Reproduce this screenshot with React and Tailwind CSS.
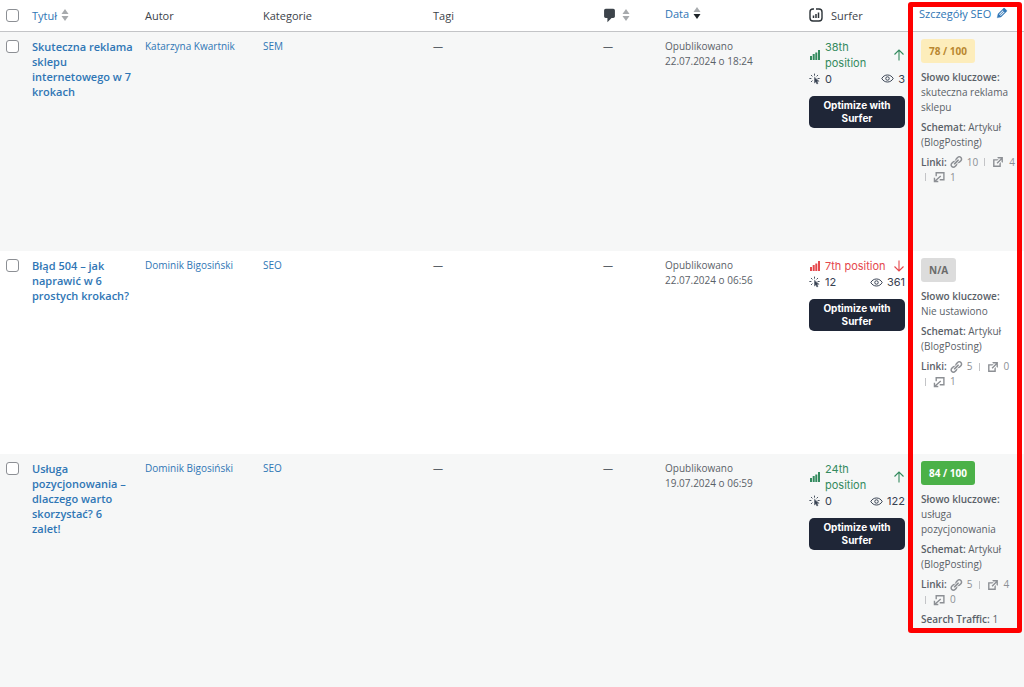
import React, { useState } from 'react';

const posts = [
  {
    id: 1,
    title: 'Skuteczna\u00a0reklama sklepu internetowego w 7 krokach',
    author: 'Katarzyna Kwartnik',
    category: 'SEM',
    date: '22.07.2024 o 18:24',
    position: '38th position',
    trend: 'up',
    clicks: 0,
    views: 3,
    score: '78 / 100',
    scoreClass: 'bg-[#fdedbb] text-[#b98730]',
    keyword: 'skuteczna reklama sklepu',
    links: [10, 4, 1],
    rowClass: 'h-[220px] bg-[#f6f7f7]',
  },
  {
    id: 2,
    title: 'Błąd 504 – jak naprawić w 6 prostych krokach?',
    author: 'Dominik Bigosiński',
    category: 'SEO',
    date: '22.07.2024 o 06:56',
    position: '7th position',
    trend: 'down',
    clicks: 12,
    views: 361,
    score: 'N/A',
    scoreClass: 'bg-[#dcdcdc] text-[#6b6b6b]',
    keyword: 'Nie ustawiono',
    links: [5, 0, 1],
    rowClass: 'h-[203px] bg-white',
  },
  {
    id: 3,
    title: 'Usługa pozycjonowania – dlaczego warto skorzystać? 6 zalet!',
    author: 'Dominik Bigosiński',
    category: 'SEO',
    date: '19.07.2024 o 06:59',
    position: '24th position',
    trend: 'up',
    clicks: 0,
    views: 122,
    score: '84 / 100',
    scoreClass: 'bg-[#4bb148] text-white',
    keyword: 'usługa pozycjonowania',
    links: [5, 4, 0],
    traffic: 1,
    rowClass: 'h-[233px] bg-[#f6f7f7]',
  },
];

const LinkIcon = () => (
  <svg viewBox="0 0 20 20" className="size-3.5" fill="currentColor" aria-hidden="true">
    <path d="M17.74 2.76c1.68 1.69 1.68 4.41 0 6.1l-1.53 1.52c-1.12 1.12-2.7 1.47-4.14 1.09l2.62-2.61.76-.77.76-.76c.84-.84.84-2.2 0-3.04-.84-.85-2.2-.85-3.04 0l-.77.76-3.38 3.38c-.37-1.44-.02-3.02 1.1-4.14l1.52-1.53c1.69-1.68 4.42-1.68 6.1 0zM8.59 13.43l5.34-5.34c.42-.42.42-1.1 0-1.52-.44-.43-1.13-.39-1.53 0l-5.33 5.34c-.42.42-.42 1.1 0 1.52.44.43 1.13.39 1.52 0zm-.76 2.29l4.14-4.15c.38 1.44.03 3.02-1.09 4.14l-1.52 1.53c-1.69 1.68-4.41 1.68-6.1 0-1.68-1.68-1.68-4.42 0-6.1l1.53-1.52c1.12-1.12 2.7-1.47 4.14-1.1l-4.14 4.15c-.85.84-.85 2.2 0 3.05.84.84 2.2.84 3.04 0z" />
  </svg>
);

const ExternalIcon = () => (
  <svg viewBox="0 0 20 20" className="size-3.5" fill="currentColor" aria-hidden="true">
    <path d="M9 3h8v8l-2-1V6.92l-5.6 5.59-1.41-1.41L14.08 5H10zm3 12v-3l2-2v7H3V6h8L9 8H5v7h7z" />
  </svg>
);

const IncomingIcon = () => (
  <svg viewBox="0 0 20 20" className="size-3.5" fill="none" stroke="currentColor" strokeWidth="2" aria-hidden="true">
    <path d="M6 9V4h11v10h-6" />
    <path d="M12.500 8.500L4 16M3.500 11v5.500H9" />
  </svg>
);

const EditIcon = () => (
  <svg viewBox="0 0 20 20" className="size-3.5" fill="currentColor" stroke="currentColor" strokeWidth="0.4" aria-hidden="true">
    <path d="M13.89 3.39l2.71 2.72c.46.46.42 1.24.03 1.64l-8.01 8.02-5.56 1.16 1.16-5.58s7.6-7.63 7.99-8.03c.39-.39 1.22-.39 1.68.07zm-2.73 2.79l-5.59 5.61 1.11 1.11 5.54-5.65zm-2.97 8.23l5.58-5.6-1.07-1.08-5.59 5.6z" />
  </svg>
);

const CommentIcon = () => (
  <svg viewBox="2 1 15 18" className="h-[15px] w-[13px]" fill="#3c434a" aria-hidden="true">
    <path d="M5 2h9c1.100 0 2 .9 2 2v7c0 1.100-.9 2-2 2h-2l-5 5v-5H5c-1.100 0-2-.9-2-2V4c0-1.100.9-2 2-2z" />
  </svg>
);

const SurferIcon = () => (
  <svg viewBox="0 0 14 14" className="size-3.5" fill="none" stroke="#2c3338" strokeWidth="1.4" aria-hidden="true">
    <path d="M5 1H4Q1 1 1 4V10Q1 13 4 13H10Q13 13 13 10V4Q13 1 10 1H7" />
    <path d="M4.500 10V7.500M7 10V6M9.500 10V4.500" strokeWidth="1.500" />
  </svg>
);

const SignalIcon = () => (
  <svg viewBox="0 0 10 10" className="size-2.5 shrink-0" fill="currentColor" aria-hidden="true">
    <rect x="0" y="6" width="2" height="4" />
    <rect x="2.700" y="4" width="2" height="6" />
    <rect x="5.300" y="2.500" width="2" height="7.500" />
    <rect x="8" y="0" width="2" height="10" />
  </svg>
);

const ClickIcon = () => (
  <svg viewBox="0 0 24 24" className="size-3" fill="none" stroke="#4b5563" strokeWidth="2" strokeLinecap="round" aria-hidden="true">
    <path d="M11 2v2.500M4.500 4.500l1.800 1.800M1.500 11h2.500M4.500 17.500l1.800-1.800M17.500 4.500l-1.800 1.800M18 11h2.500" />
    <path d="M11 9v11l2.700-2.500 2 4.500 2.300-1-2-4.500h3.500z" fill="#374151" strokeWidth="1" />
  </svg>
);

const EyeIcon = () => (
  <svg viewBox="0 0 24 24" className="size-[13px]" fill="none" stroke="#374151" strokeWidth="1.8" aria-hidden="true">
    <path d="M1.500 12C3.500 8 7.500 5.500 12 5.500S20.500 8 22.500 12c-2 4-6 6.500-10.500 6.500S3.500 16 1.500 12z" />
    <circle cx="12" cy="12" r="3.200" />
  </svg>
);

const TrendArrow = ({ trend }) => (
  <svg viewBox="0 0 12 12" className="ml-1 size-3 shrink-0" fill="none" stroke="currentColor" strokeWidth="1.1" aria-hidden="true">
    {trend === 'up' ? <path d="M6 11.500V1M1.500 5.500L6 1l4.500 4.500" /> : <path d="M6 .5V11M1.500 6.500L6 11l4.500-4.500" />}
  </svg>
);

const SortArrows = ({ active }) => (
  <svg viewBox="0 0 8 12" className="h-3 w-2" fill="#a7aaad" aria-hidden="true">
    <path d="M4 0l3.500 5h-7z" />
    <path d="M4 12L.5 7h7z" fill={active ? '#1d2327' : '#a7aaad'} />
  </svg>
);

const SurferCell = ({ post }) => (
  <div className="font-['Inter',sans-serif] text-[11px] leading-4 text-[#374151]">
    <div className={`flex items-center pl-px ${post.trend === 'up' ? 'text-[#338a5e]' : 'text-[#e5484d]'}`}>
      <SignalIcon />
      <span className="ml-[5px] flex-1">{post.position}</span>
      <TrendArrow trend={post.trend} />
    </div>
    <div className="flex items-center justify-between">
      <span className="flex items-center gap-1"><ClickIcon />{post.clicks}</span>
      <span className="flex items-center gap-1"><EyeIcon />{post.views}</span>
    </div>
    <button type="button" className="mt-[9px] block w-full rounded-[5px] bg-[#1f2637] px-2 py-[3px] text-[10px] leading-[13px] font-bold text-white">
      Optimize with Surfer
    </button>
  </div>
);

const SeoCell = ({ post }) => (
  <div className="flex flex-col items-start gap-[5px]">
    <span className={`mb-0.5 rounded-[3px] px-2 text-[10px] leading-6 font-bold ${post.scoreClass}`}>{post.score}</span>
    <p><strong className="block font-semibold">Słowo kluczowe:</strong>{post.keyword}</p>
    <p><strong className="font-semibold">Schemat:</strong> Artykuł<br />(BlogPosting)</p>
    <div className="flex flex-wrap items-center text-[#8c8f94]">
      <strong className="mr-0.5 font-semibold text-[#5a6168]">Linki:</strong>
      <LinkIcon />
      <span className="ml-1">{post.links[0]}</span>
      <span className="mx-1.5 h-2 w-px bg-[#c3c4c7]" />
      <ExternalIcon />
      <span className="ml-1">{post.links[1]}</span>
      <span className="flex basis-full items-center">
        <span className="mr-1.5 ml-1 h-2 w-px bg-[#c3c4c7]" />
        <IncomingIcon />
        <span className="ml-1">{post.links[2]}</span>
      </span>
    </div>
    {post.traffic && <p><strong className="font-semibold">Search Traffic:</strong> {post.traffic}</p>}
  </div>
);

const PostsTable = () => {
  const [selected, setSelected] = useState([]);

  const toggle = (id) => {
    setSelected(selected.includes(id) ? selected.filter((s) => s !== id) : [...selected, id]);
  };

  const toggleAll = () => {
    setSelected(selected.length === posts.length ? [] : posts.map((p) => p.id));
  };

  const checkbox = 'block size-[13px] appearance-none rounded-[3px] border border-[#8c8f94] bg-white checked:bg-[#2271b1]';

  return (
    <table className="w-full table-fixed border-collapse text-left">
      <colgroup>
        <col className="w-[24px]" />
        <col className="w-[113px]" />
        <col className="w-[118px]" />
        <col className="w-[170px]" />
        <col />
        <col className="w-[62px]" />
        <col className="w-[144px]" />
        <col className="w-[112px]" />
        <col className="w-[111px]" />
      </colgroup>
      <thead>
        <tr className="h-[31px] border-b border-[#c3c4c7] text-[11px] text-[#3c434a] [&>th]:px-2 [&>th]:font-normal">
          <td className="pl-1.5">
            <input type="checkbox" aria-label="Zaznacz wszystko" className={checkbox} checked={selected.length === posts.length} onChange={toggleAll} />
          </td>
          <th><a href="#title" className="flex items-center gap-1 text-[#2f76b5]">Tytuł <SortArrows /></a></th>
          <th>Autor</th>
          <th>Kategorie</th>
          <th>Tagi</th>
          <th><a href="#comments" aria-label="Komentarze" className="flex items-center gap-1.5"><CommentIcon /><SortArrows /></a></th>
          <th><a href="#date" className="flex items-center gap-1 pb-1 text-[#2f76b5]">Data <SortArrows active /></a></th>
          <th><span className="flex items-center gap-2"><SurferIcon />Surfer</span></th>
          <th><a href="#seo" className="-ml-0.5 flex items-center gap-1 pb-1 whitespace-nowrap text-[#2f76b5]">Szczegóły SEO <EditIcon /></a></th>
        </tr>
      </thead>
      <tbody>
        {posts.map((post) => (
          <tr key={post.id} className={`align-top [&>td]:px-2 [&>td]:pt-[7px] ${post.rowClass}`}>
            <td className="pt-2! pl-1.5!">
              <input type="checkbox" aria-label={post.title} className={checkbox} checked={selected.includes(post.id)} onChange={() => toggle(post.id)} />
            </td>
            <td className="pr-[5px]!"><a href="#post" className="block text-[11px] font-semibold text-[#2f76b5]">{post.title}</a></td>
            <td><a href="#author" className="text-[#2f76b5]">{post.author}</a></td>
            <td><a href="#category" className="text-[#2f76b5]">{post.category}</a></td>
            <td>—</td>
            <td>—</td>
            <td>Opublikowano<br />{post.date}</td>
            <td><SurferCell post={post} /></td>
            <td><SeoCell post={post} /></td>
          </tr>
        ))}
      </tbody>
    </table>
  );
};

export default function App() {
  return (
    <div className="relative min-h-screen bg-[#f6f7f7] font-['Open_Sans',sans-serif] text-[10px] leading-[15px] text-[#5a6168]">
      <div className="bg-white">
        <PostsTable />
      </div>
      <div className="pointer-events-none absolute top-0.5 right-0.5 h-[631px] w-[114px] rounded-[3px] border-[5px] border-[#ff0000]" />
    </div>
  );
}
